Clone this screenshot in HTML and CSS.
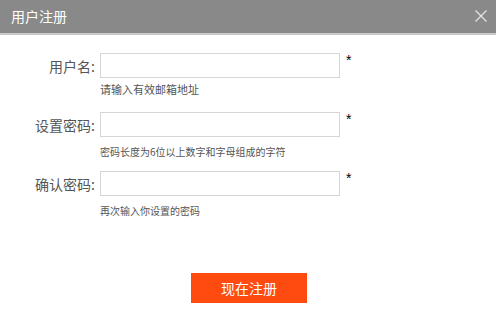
FILE: index.html
```html
<!DOCTYPE html>
<html lang="zh-CN">
<head>
    <meta charset="UTF-8">
    <meta name="viewport" content="width=device-width, initial-scale=1.0">
    <title>用户注册</title>
    <link rel="stylesheet" href="styles.css">
</head>
<body>
    <div class="dialog">
        <div class="dialog-header">
            <h1>用户注册</h1>
            <a href="#" class="close-btn" title="关闭">
                <svg width="12" height="12" viewBox="0 0 12 12">
                    <path d="M0.5 0.5 L11.5 11.5 M11.5 0.5 L0.5 11.5" stroke="#e6e6e6" stroke-width="1.2" fill="none"/>
                </svg>
            </a>
        </div>

        <form class="reg-form">
            <div class="form-group">
                <div class="form-row">
                    <label for="username">用户名:</label>
                    <input type="text" id="username" name="username">
                    <span class="required">*</span>
                </div>
                <p class="hint hint-first">请输入有效邮箱地址</p>
            </div>

            <div class="form-group">
                <div class="form-row">
                    <label for="password">设置密码:</label>
                    <input type="password" id="password" name="password">
                    <span class="required">*</span>
                </div>
                <p class="hint">密码长度为6位以上数字和字母组成的字符</p>
            </div>

            <div class="form-group">
                <div class="form-row">
                    <label for="confirm">确认密码:</label>
                    <input type="password" id="confirm" name="confirm">
                    <span class="required">*</span>
                </div>
                <p class="hint">再次输入你设置的密码</p>
            </div>

            <div class="form-actions">
                <button type="submit" class="submit-btn">现在注册</button>
            </div>
        </form>
    </div>
</body>
</html>
```

FILE: styles.css
```css
* {
    margin: 0;
    padding: 0;
    box-sizing: border-box;
}
body {
    font-family: "Noto Sans CJK SC", "Liberation Sans", sans-serif;
    background: #fff;
    color: #555;
}
.dialog-header {
    display: flex;
    justify-content: space-between;
    align-items: center;
    height: 35px;
    padding: 0 9px 2px 11px;
    background: #898989;
    border-bottom: 2px solid #c9c9c9;
}
.dialog-header h1 {
    font-size: 14px;
    font-weight: normal;
    color: #fff;
    line-height: 1;
}
.close-btn {
    display: block;
    width: 12px;
    height: 12px;
    margin-top: 1px;
}
.close-btn svg {
    display: block;
}
.reg-form {
    padding-top: 18px;
}
.form-group {
    height: 59px;
}
.form-row {
    display: flex;
    align-items: center;
}
.form-row label {
    width: 95px;
    text-align: right;
    font-size: 14px;
    color: #555;
}
.form-row input {
    width: 240px;
    height: 25px;
    margin-left: 5px;
    border: 1px solid #d6d6d6;
    outline: none;
}
.required {
    align-self: flex-start;
    margin-left: 6px;
    font-family: "Liberation Sans", sans-serif;
    font-size: 14px;
    line-height: 14px;
    color: #000;
}
.hint {
    margin: 9px 0 0 100px;
    font-size: 10px;
    line-height: 12px;
    color: #555;
}
.hint-first {
    margin-top: 5px;
    font-size: 11px;
}
.form-actions {
    display: flex;
    justify-content: center;
    padding-top: 43px;
}
.submit-btn {
    width: 116px;
    height: 30px;
    margin-left: 2px;
    background: #ff4a10;
    color: #fff;
    border: none;
    font-family: inherit;
    font-size: 14px;
    cursor: pointer;
}
```
